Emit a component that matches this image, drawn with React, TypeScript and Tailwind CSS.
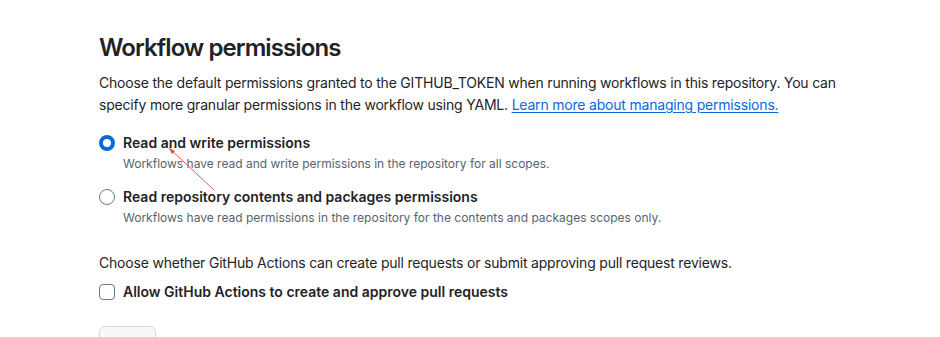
import React from 'react';

const OPTIONS = [
  {
    id: 'write',
    label: 'Read and write permissions',
    hint: 'Workflows have read and write permissions in the repository for all scopes.',
    checked: true,
  },
  {
    id: 'read',
    label: 'Read repository contents and packages permissions',
    hint: 'Workflows have read permissions in the repository for the contents and packages scopes only.',
    checked: false,
  },
];

export default function App() {
  return (
    <main className="relative h-[337px] w-[940px] overflow-hidden bg-white font-['Inter',sans-serif] text-[#1f2328]">
      <div className="pl-[99px] pt-[33px]">
        <h2 className="text-[24px] font-semibold leading-[30px] tracking-[-0.9px]">Workflow permissions</h2>

        <p className="mt-[9px] max-w-[748px] text-[14px] leading-[22px] tracking-[-0.2px]">
          Choose the default permissions granted to the GITHUB_TOKEN when running workflows in this repository. You can
          specify more granular permissions in the workflow using YAML.{' '}
          <a href="#" className="text-[#0969da] underline underline-offset-2">Learn more about managing permissions.</a>
        </p>

        <div className="mt-[17px] flex flex-col gap-[14px]">
          {OPTIONS.map(opt => (
            <div key={opt.id} className="flex gap-2">
              <span
                className={
                  opt.checked
                    ? 'mt-[2px] h-4 w-4 shrink-0 rounded-full border-[4px] border-[#0969da] bg-white'
                    : 'mt-[2px] h-4 w-4 shrink-0 rounded-full border border-[#6e7781] bg-white'
                }
              />
              <div>
                <div className="text-[14px] font-semibold leading-5">{opt.label}</div>
                <div className="mt-[2px] text-[12px] leading-[18px] text-[#59636e]">{opt.hint}</div>
              </div>
            </div>
          ))}
        </div>

        <p className="mt-[25px] text-[14px] leading-[22px] tracking-[-0.2px]">
          Choose whether GitHub Actions can create pull requests or submit approving pull request reviews.
        </p>

        <label className="mt-[8px] flex items-center gap-2">
          <span className="h-4 w-4 shrink-0 rounded-[4px] border border-[#6e7781] bg-white" />
          <span className="text-[14px] font-semibold leading-5">Allow GitHub Actions to create and approve pull requests</span>
        </label>

        <button className="mt-[24px] h-[34px] w-[57px] rounded-md border border-[#d1d9e0] bg-[#f6f8fa] text-[14px] font-medium">
          Save
        </button>
      </div>

      {/* annotation stroke */}
      <svg className="pointer-events-none absolute left-0 top-0" width="940" height="337">
        <line x1="169" y1="148" x2="214" y2="190" stroke="#ef4444" strokeWidth="0.9" />
        <path d="M169 148 L175 151 L172 154 Z" fill="#ef4444" />
      </svg>
    </main>
  );
}
